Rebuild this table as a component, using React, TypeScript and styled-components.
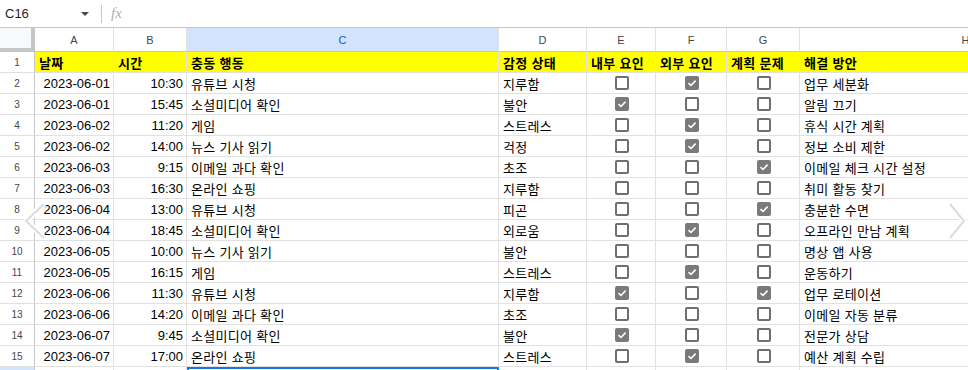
import styled, { createGlobalStyle } from "styled-components";

const GlobalStyle = createGlobalStyle`
    html, body {
        margin: 0;
        padding: 0;
        background: #ffffff;
        overflow: hidden;
    }
    body {
        font-family: "Liberation Sans", "Noto Sans CJK KR", Arial, sans-serif;
        color: #000000;
    }
`;

const Page = styled.div`
    position: relative;
    width: 968px;
    height: 370px;
    overflow: hidden;
    background: #ffffff;
`;

const FormulaBar = styled.div`
    display: flex;
    align-items: center;
    height: 28px;
    box-sizing: border-box;
    border-bottom: 1px solid #c7c7c7;
`;

const NameBox = styled.div`
    display: flex;
    align-items: center;
    justify-content: space-between;
    width: 84px;
    padding-left: 5px;
    font-size: 13px;
    color: #1f1f1f;
`;

const Caret = styled.span`
    width: 0;
    height: 0;
    border-left: 4px solid transparent;
    border-right: 4px solid transparent;
    border-top: 4px solid #444746;
`;

const Separator = styled.div`
    width: 1px;
    height: 18px;
    background: #c7c7c7;
    margin: 0 9px 0 12px;
`;

const Fx = styled.span`
    font-family: "Liberation Serif", serif;
    font-style: italic;
    font-size: 15px;
    color: #b0b0b0;
`;

const Grid = styled.div`
    display: grid;
    grid-template-columns: 35px 79px 73px 312px 88px 69px 71px 73px 332px;
    grid-template-rows: 24px repeat(16, 21px);
    width: 1132px;
`;

const Corner = styled.div`
    box-sizing: border-box;
    background: #f8f9fa;
    border-right: 4px solid #c4c7c5;
    border-bottom: 4px solid #c4c7c5;
`;

const ColHead = styled.div<{ $active?: boolean }>`
    box-sizing: border-box;
    display: flex;
    align-items: center;
    justify-content: center;
    font-size: 11px;
    color: ${(p) => (p.$active ? "#0b57d0" : "#444746")};
    background: ${(p) => (p.$active ? "#d3e3fd" : "#ffffff")};
    border-right: 1px solid #e1e1e1;
    border-bottom: 1px solid #c7c7c7;
`;

const RowHead = styled.div<{ $active?: boolean }>`
    box-sizing: border-box;
    display: flex;
    align-items: center;
    justify-content: center;
    font-size: 10px;
    color: #444746;
    background: ${(p) => (p.$active ? "#d3e3fd" : "#ffffff")};
    border-right: 1px solid #c7c7c7;
    border-bottom: 1px solid #e1e1e1;
`;

const Cell = styled.div<{ $head?: boolean; $align?: "left" | "right" | "center"; $selected?: boolean }>`
    box-sizing: border-box;
    display: flex;
    align-items: center;
    justify-content: ${(p) =>
        p.$align === "right" ? "flex-end" : p.$align === "center" ? "center" : "flex-start"};
    padding: 0 3px 0 4px;
    font-size: 13px;
    letter-spacing: ${(p) => (p.$align ? "0" : "0.3px")};
    font-weight: ${(p) => (p.$head ? 700 : 400)};
    background: ${(p) => (p.$head ? "#ffff00" : "#ffffff")};
    border-right: 1px solid #e1e1e1;
    border-bottom: 1px solid #e1e1e1;
    white-space: nowrap;
    overflow: hidden;
    ${(p) => p.$selected && "outline: 2px solid #1a73e8; outline-offset: -2px;"}
`;

const Box = styled.span<{ $checked: boolean }>`
    box-sizing: border-box;
    display: flex;
    align-items: center;
    justify-content: center;
    width: 14px;
    height: 14px;
    border-radius: 2px;
    border: 2px solid ${(p) => (p.$checked ? "#7a7a7a" : "#6f6f6f")};
    background: ${(p) => (p.$checked ? "#7a7a7a" : "#ffffff")};
`;

const Nav = styled.svg<{ $side: "left" | "right" }>`
    position: absolute;
    top: 200px;
    ${(p) => (p.$side === "left" ? "left: 20px;" : "left: 944px;")}
    width: 30px;
    height: 42px;
    pointer-events: none;
`;

type Row = {
    date: string;
    time: string;
    act: string;
    mood: string;
    e: boolean;
    f: boolean;
    g: boolean;
    fix: string;
};

const rows: Row[] = [
    { date: "2023-06-01", time: "10:30", act: "유튜브 시청", mood: "지루함", e: false, f: true, g: false, fix: "업무 세분화" },
    { date: "2023-06-01", time: "15:45", act: "소셜미디어 확인", mood: "불안", e: true, f: false, g: false, fix: "알림 끄기" },
    { date: "2023-06-02", time: "11:20", act: "게임", mood: "스트레스", e: false, f: true, g: false, fix: "휴식 시간 계획" },
    { date: "2023-06-02", time: "14:00", act: "뉴스 기사 읽기", mood: "걱정", e: false, f: true, g: false, fix: "정보 소비 제한" },
    { date: "2023-06-03", time: "9:15", act: "이메일 과다 확인", mood: "초조", e: false, f: false, g: true, fix: "이메일 체크 시간 설정" },
    { date: "2023-06-03", time: "16:30", act: "온라인 쇼핑", mood: "지루함", e: false, f: false, g: false, fix: "취미 활동 찾기" },
    { date: "2023-06-04", time: "13:00", act: "유튜브 시청", mood: "피곤", e: false, f: false, g: true, fix: "충분한 수면" },
    { date: "2023-06-04", time: "18:45", act: "소셜미디어 확인", mood: "외로움", e: false, f: true, g: false, fix: "오프라인 만남 계획" },
    { date: "2023-06-05", time: "10:00", act: "뉴스 기사 읽기", mood: "불안", e: false, f: false, g: false, fix: "명상 앱 사용" },
    { date: "2023-06-05", time: "16:15", act: "게임", mood: "스트레스", e: false, f: true, g: false, fix: "운동하기" },
    { date: "2023-06-06", time: "11:30", act: "유튜브 시청", mood: "지루함", e: true, f: false, g: true, fix: "업무 로테이션" },
    { date: "2023-06-06", time: "14:20", act: "이메일 과다 확인", mood: "초조", e: false, f: false, g: false, fix: "이메일 자동 분류" },
    { date: "2023-06-07", time: "9:45", act: "소셜미디어 확인", mood: "불안", e: true, f: false, g: false, fix: "전문가 상담" },
    { date: "2023-06-07", time: "17:00", act: "온라인 쇼핑", mood: "스트레스", e: false, f: true, g: false, fix: "예산 계획 수립" },
];

const letters = ["A", "B", "C", "D", "E", "F", "G", "H"];
const headers = ["날짜", "시간", "충동 행동", "감정 상태", "내부 요인", "외부 요인", "계획 문제", "해결 방안"];

function Check({ checked }: { checked: boolean }) {
    return (
        <Cell $align="center">
            <Box $checked={checked}>
                {checked && (
                    <svg width="10" height="10" viewBox="0 0 10 10">
                        <path d="M1.5 5.2 L4 7.5 L8.6 2.6" fill="none" stroke="#ffffff" strokeWidth="1.6" />
                    </svg>
                )}
            </Box>
        </Cell>
    );
}

export default function App() {
    return (
        <Page>
            <GlobalStyle />
            <FormulaBar>
                <NameBox>
                    C16
                    <Caret />
                </NameBox>
                <Separator />
                <Fx>fx</Fx>
            </FormulaBar>

            <Grid>
                {/* column letters */}
                <Corner />
                {letters.map((l) => (
                    <ColHead key={l} $active={l === "C"}>{l}</ColHead>
                ))}

                {/* yellow header row */}
                <RowHead>1</RowHead>
                {headers.map((h) => (
                    <Cell key={h} $head>{h}</Cell>
                ))}

                {rows.map((r, i) => (
                    <div key={i} style={{ display: "contents" }}>
                        <RowHead>{i + 2}</RowHead>
                        <Cell $align="right">{r.date}</Cell>
                        <Cell $align="right">{r.time}</Cell>
                        <Cell>{r.act}</Cell>
                        <Cell>{r.mood}</Cell>
                        <Check checked={r.e} />
                        <Check checked={r.f} />
                        <Check checked={r.g} />
                        <Cell>{r.fix}</Cell>
                    </div>
                ))}

                {/* row 16 (only its top edge shows), C16 selected */}
                <RowHead $active />
                <Cell />
                <Cell />
                <Cell $selected />
                <Cell />
                <Cell />
                <Cell />
                <Cell />
                <Cell />
            </Grid>

            <Nav $side="left" viewBox="0 0 30 42">
                <path d="M24 4 L6 21 L24 38" fill="none" stroke="#ffffff" strokeWidth="6" strokeLinejoin="round" />
                <path d="M24 4 L6 21 L24 38" fill="none" stroke="#dcdcdc" strokeWidth="2" />
            </Nav>
            <Nav $side="right" viewBox="0 0 30 42">
                <path d="M6 4 L20 21 L6 38" fill="none" stroke="#ffffff" strokeWidth="6" strokeLinejoin="round" />
                <path d="M6 4 L20 21 L6 38" fill="none" stroke="#dcdcdc" strokeWidth="2" />
            </Nav>
        </Page>
    );
}
